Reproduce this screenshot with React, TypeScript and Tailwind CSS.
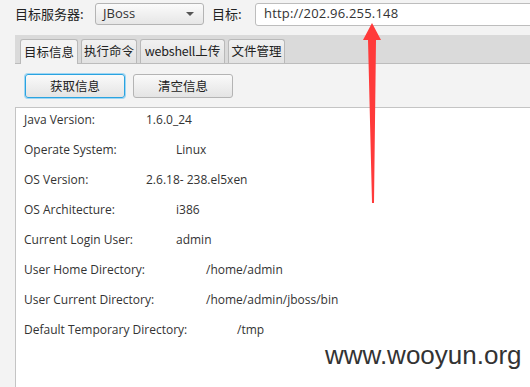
import React from "react";

const cjk = { fontFamily: '"Noto Sans CJK SC", "Noto Sans", sans-serif' };
const sys = { fontFamily: '"Open Sans", "Noto Sans CJK SC", sans-serif' };

const rows: { label: string; value: string; col: string }[] = [
  { label: "Java Version:", value: "1.6.0_24", col: "grid-cols-[122px_1fr]" },
  { label: "Operate System:", value: "Linux", col: "grid-cols-[152px_1fr]" },
  { label: "OS Version:", value: "2.6.18- 238.el5xen", col: "grid-cols-[122px_1fr]" },
  { label: "OS Architecture:", value: "i386", col: "grid-cols-[152px_1fr]" },
  { label: "Current Login User:", value: "admin", col: "grid-cols-[152px_1fr]" },
  { label: "User Home Directory:", value: "/home/admin", col: "grid-cols-[182px_1fr]" },
  { label: "User Current Directory:", value: "/home/admin/jboss/bin", col: "grid-cols-[182px_1fr]" },
  { label: "Default Temporary Directory:", value: "/tmp", col: "grid-cols-[213px_1fr]" },
];

const tabBase =
  "h-[24px] flex items-center justify-center bg-gradient-to-b from-[#f1f1f1] to-[#e2e2e2] border border-b-0 border-[#b9b9b9] rounded-t-[3px] text-[12.5px]";

export default function App() {
  return (
    <div className="relative w-[530px] h-[387px] overflow-hidden bg-[#f3f3f3] text-[#222]">
      {/* top row */}
      <div className="flex items-center h-[27px] pt-[1px] whitespace-nowrap" style={cjk}>
        <span className="ml-[15px] w-[80px] shrink-0 text-[13px] text-[#222]">目标服务器:</span>
        <div className="shrink-0 flex items-center justify-between w-[109px] h-[22px] border border-[#b4b4b4] rounded-[3px] bg-gradient-to-b from-[#fbfbfb] to-[#e6e6e6] px-[7px]">
          <span className="text-[13px] text-[#333]" style={sys}>JBoss</span>
          <svg width="9" height="6" viewBox="0 0 9 6" className="mr-[1px]">
            <polygon points="0,1 8,1 4,5" fill="#555" />
          </svg>
        </div>
        <span className="ml-[8px] w-[43px] shrink-0 text-[13px] text-[#222]">目标:</span>
        <div className="shrink-0 flex items-center w-[290px] h-[23px] border border-[#bdbdbd] rounded-[3px] bg-white pl-[8px]">
          <span className="text-[13px] text-[#333] tracking-[0.2px]" style={sys}>http://202.96.255.148</span>
        </div>
      </div>

      {/* tab strip */}
      <div className="ml-[15px] mt-[8px] h-[29px] bg-[#dadada] border-b border-[#bcbcbc] flex items-end pl-[5px] gap-[3px] whitespace-nowrap" style={cjk}>
        <div className="w-[58px] h-[25px] -mb-[1px] flex items-center justify-center bg-[#f3f3f3] border border-b-0 border-[#b9b9b9] rounded-t-[3px] text-[12.5px]">目标信息</div>
        <div className={`w-[56px] ${tabBase}`}>执行命令</div>
        <div className={`w-[85px] ${tabBase}`}>
          <span className="tracking-[-0.2px]">webshell</span>上传
        </div>
        <div className={`w-[57px] ${tabBase}`}>文件管理</div>
      </div>

      {/* buttons */}
      <div className="flex gap-[8px] ml-[25px] mt-[10px]" style={cjk}>
        <div className="w-[100px] h-[24px] flex items-center justify-center rounded-[3px] border border-[#2aa3e0] shadow-[0_0_0_1px_#9fd6f3] bg-gradient-to-b from-[#fafafa] to-[#e4e4e4] text-[12.5px]">获取信息</div>
        <div className="w-[100px] h-[24px] flex items-center justify-center rounded-[3px] border border-[#b4b4b4] bg-gradient-to-b from-[#fafafa] to-[#e4e4e4] text-[12.5px]">清空信息</div>
      </div>

      {/* info panel */}
      <div className="ml-[15px] mt-[9px] h-[300px] bg-white border-t border-l border-[#c4c4c4] pt-[3px] pl-[8px] flex flex-col gap-[12px]" style={sys}>
        {rows.map((r) => (
          <div key={r.label} className={`grid ${r.col} leading-[18px] text-[12px] text-[#333]`}>
            <span>{r.label}</span>
            <span>{r.value}</span>
          </div>
        ))}
      </div>

      {/* watermark */}
      <div
        className="absolute left-[325px] top-[340px] text-[26px] leading-[30px] text-[#333]"
        style={{ fontFamily: '"Liberation Sans", Arial, sans-serif' }}
      >
        www.wooyun.org
      </div>

      {/* red arrow */}
      <svg className="absolute left-0 top-0 pointer-events-none" width="530" height="387">
        <polygon points="372,23 363,40 368,40 372,203 374,203 376,40 381,40" fill="#ff3a3a" />
      </svg>
    </div>
  );
}
